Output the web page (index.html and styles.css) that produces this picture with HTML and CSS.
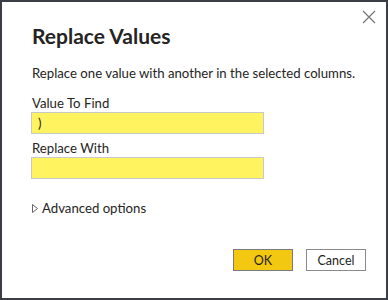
FILE: index.html
```html
<!DOCTYPE html>
<html lang="en">
<head>
    <meta charset="UTF-8">
    <title>Replace Values</title>
    <link rel="stylesheet" href="styles.css">
</head>
<body>
    <div class="dialog">
        <button class="close" type="button" aria-label="Close">
            <svg width="14" height="14" viewBox="0 0 14 14"><path d="M1 1 L13 13 M13 1 L1 13" stroke="#777" stroke-width="1.3" fill="none"/></svg>
        </button>
        <h1 class="title">Replace Values</h1>
        <p class="desc">Replace one value with another in the selected columns.</p>

        <div class="field">
            <label for="find">Value To Find</label>
            <input type="text" id="find" value=")">
        </div>
        <div class="field">
            <label for="replace">Replace With</label>
            <input type="text" id="replace" value="">
        </div>

        <div class="advanced">
            <svg width="6" height="9" viewBox="0 0 6 9"><path d="M0.5 0.5 L5.5 4.5 L0.5 8.5 Z" stroke="#666" stroke-width="1" fill="none"/></svg>
            <span>Advanced options</span>
        </div>

        <div class="actions">
            <button type="button" class="btn primary">OK</button>
            <button type="button" class="btn">Cancel</button>
        </div>
    </div>
</body>
</html>
```

FILE: styles.css
```css
html, body {
    margin: 0;
    padding: 0;
}
body {
    background-color: #3b3f45;
    font-family: Lato, "Noto Sans", sans-serif;
    color: #252423;
}
.dialog {
    position: relative;
    box-sizing: border-box;
    width: 384px;
    height: 296px;
    margin: 2px;
    background-color: #fff;
    padding: 21px 29px 0;
}
.close {
    position: absolute;
    top: 8px;
    right: 10px;
    border: none;
    background: none;
    padding: 0;
    width: 14px;
    height: 14px;
}
.title {
    margin: 0 0 0 1px;
    font-size: 21px;
    font-weight: 700;
    line-height: 26px;
}
.desc {
    margin: 15px 0 12px 1px;
    font-size: 13.2px;
    line-height: 18px;
    white-space: nowrap;
}
.field {
    margin-bottom: 5px;
}
.field label {
    display: block;
    font-size: 13.2px;
    line-height: 18px;
    margin: 0 0 0 1px;
}
.field input {
    box-sizing: border-box;
    width: 233px;
    height: 22px;
    border: 1px solid #c8c8c8;
    background-color: #fff35f;
    font-family: inherit;
    font-size: 13px;
    padding: 0 6px;
    color: #252423;
}
.advanced {
    display: flex;
    align-items: center;
    gap: 4px;
    margin: 20px 0 0 1px;
    font-size: 13.2px;
    line-height: 18px;
}
.actions {
    position: absolute;
    right: 20px;
    bottom: 27px;
    display: flex;
    gap: 13px;
}
.btn {
    box-sizing: border-box;
    width: 60px;
    height: 22px;
    border: 1px solid #8a8a8a;
    background-color: #fff;
    font-family: inherit;
    font-size: 12.5px;
    color: #252423;
    padding: 0;
}
.btn.primary {
    background-color: #f2c811;
    border-color: #7a7a7a;
}
```
